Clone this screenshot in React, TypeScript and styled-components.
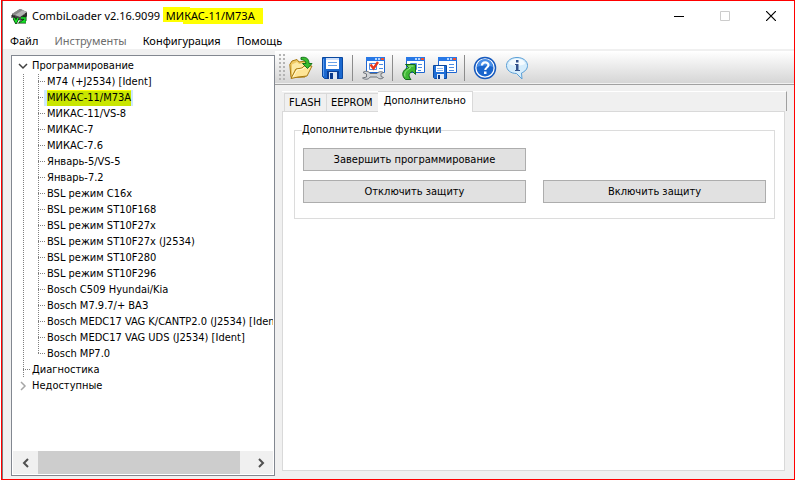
import React, { useState } from "react";
import styled, { createGlobalStyle, css } from "styled-components";

const uiFont = '"DejaVu Sans Condensed", "DejaVu Sans", sans-serif';
const titleFont = '"Noto Sans", "Open Sans", sans-serif';

const GlobalStyle = createGlobalStyle`
  *, *::before, *::after { box-sizing: border-box; }
  body { margin: 0; background: #fff; }
  button { font: inherit; color: inherit; padding: 0; border: 0; background: none; }
`;

const Frame = styled.div`
  display: flex;
  height: 100vh;
  padding-left: 1px;
  overflow: hidden;
  font: 11px/16px ${uiFont};
  color: #000;
`;

const Window = styled.div`
  flex: 1;
  min-width: 0;
  display: flex;
  flex-direction: column;
  border: 1px solid #f00;
  background: #f0f0f0;
  box-shadow: inset 1px 0 #7c7c7c;
  padding-left: 1px;
`;

const TitleBar = styled.header`
  display: flex;
  align-items: center;
  height: 30px;
  padding-left: 8px;
  background: #fff;
  font: 11px/16px ${titleFont};
`;

const Title = styled.h1`
  margin: 0 auto 0 4px;
  font: inherit;
  white-space: nowrap;
`;

const TitleMark = styled.mark`
  color: inherit;
  padding: 1px 8px 1px 3px;
  background:
    linear-gradient(#ff0, #ff0) 0 0 / 27px 15px no-repeat,
    linear-gradient(#ff0, #ff0) 20px 1px / 100% 100% no-repeat;
`;

const CaptionButton = styled.button`
  display: grid;
  place-items: center;
  width: 46px;
  height: 28px;
`;

const MenuBar = styled.nav`
  display: flex;
  gap: 16px;
  height: 18px;
  padding: 0 7px;
  background: #fff;
  font: 11px/20px ${titleFont};
`;

const MenuItem = styled.button`
  white-space: nowrap;
  &:disabled { color: #6d6d6d; }
`;

const Body = styled.div`
  flex: 1;
  min-height: 0;
  display: grid;
  grid-template-columns: minmax(0, 272fr) minmax(0, 519fr);
`;

const Side = styled.aside`
  display: flex;
  min-height: 0;
  padding: 6px 0 3px 8px;
`;

const TreePanel = styled.div`
  flex: 1;
  min-width: 0;
  display: flex;
  flex-direction: column;
  border: 1px solid #828790;
  background: #fff;
  padding: 1px;
`;

const TreeView = styled.ul`
  flex: 1;
  min-height: 0;
  overflow: hidden;
  margin: 0;
  padding: 1px 0 0;
  list-style: none;
`;

const Branch = styled.ul`
  margin: 0;
  padding: 0;
  list-style: none;
`;

const dots = "repeating-linear-gradient(#808080 0 1px, transparent 1px 2px)";
const dashes = "repeating-linear-gradient(90deg, #808080 0 1px, transparent 1px 2px)";

const Row = styled.div<{ $level: number; $last?: boolean; $leaf?: boolean }>`
  display: flex;
  align-items: center;
  height: 16px;
  white-space: nowrap;
  padding-left: ${(p) => (p.$level ? 31 : p.$leaf ? 16 : 3)}px;
  ${(p) =>
    p.$level
      ? css`
          background:
            ${dots} 10px 0 / 1px 100% no-repeat,
            ${dots} 25px 0 / 1px ${p.$last ? "8px" : "100%"} no-repeat,
            ${dashes} 25px 7px / 7px 1px no-repeat;
        `
      : p.$leaf &&
        css`
          background:
            ${dots} 10px 0 / 1px 100% no-repeat,
            ${dashes} 10px 7px / 7px 1px no-repeat;
        `}
`;

const Expander = styled.button`
  display: grid;
  place-items: center;
  width: 13px;
  height: 16px;
`;

const ItemLabel = styled.span<{ $selected?: boolean }>`
  padding: 0 2px 0 3px;
  ${(p) => p.$selected && "background: #cce8ff;"}
`;

const ItemMark = styled.mark`
  display: block;
  color: inherit;
  background: #c9e600;
  box-shadow: inset 0 1px #ff0;
`;

const ScrollBar = styled.div`
  display: flex;
  height: 23px;
  background: #f0f0f0;
`;

const ScrollArrow = styled.button`
  display: grid;
  place-items: center;
  width: 25px;
`;

const ScrollTrack = styled.div`
  flex: 1;
`;

const ScrollThumb = styled.div`
  width: 97%;
  max-width: 202px;
  height: 100%;
  background: #cdcdcd;
`;

const Main = styled.main`
  display: flex;
  flex-direction: column;
  min-width: 0;
  padding-top: 2px;
`;

const ToolBar = styled.div`
  display: flex;
  align-items: center;
  height: 34px;
  padding: 0 0 0 4px;
  border-top: 1px solid #fff;
  border-bottom: 1px solid #a0a0a0;
  box-shadow: inset 0 -1px #f0f0f0;
  background: linear-gradient(#fefefe, #d4d4d4);
`;

const Grip = styled.div`
  width: 6px;
  height: 28px;
  margin-right: 4px;
  background: radial-gradient(circle at 1px 1px, #b4b4b4 1px, transparent 1px) 0 0 / 4px 4px;
`;

const Tools = styled.div`
  display: flex;
  align-items: center;
  gap: 8px;
`;

const Tool = styled.button`
  width: 24px;
  height: 24px;
  svg { display: block; }
`;

const Divider = styled.span`
  width: 2px;
  height: 26px;
  margin: 0 -1px;
  border-left: 1px solid #8c8c8c;
`;

const TabArea = styled.section`
  flex: 1;
  min-height: 0;
  display: flex;
  flex-direction: column;
  margin: 6px 9px 8px 7px;
`;

const TabList = styled.div`
  display: flex;
  align-items: flex-end;
  height: 20px;
  padding-left: 2px;
  margin-right: -2px;
  border-top: 1px solid #fff;
  border-right: 1px solid #a0a0a0;
`;

const Tab = styled.button<{ $active: boolean }>`
  height: 18px;
  padding: 0 5px 0 4px;
  white-space: nowrap;
  border: 1px solid #d9d9d9;
  border-bottom: 0;
  ${(p) =>
    p.$active
      ? css`
          z-index: 1;
          height: 21px;
          padding: 0 6px 2px;
          margin: 0 0 -1px -1px;
          background: #fff;
        `
      : css`
          & + & { border-left: 0; }
        `}
`;

const TabPage = styled.div`
  flex: 1;
  padding: 10px 9px 0 11px;
  border: 1px solid #d9d9d9;
  background: #fff;
`;

const Group = styled.fieldset`
  margin: 0;
  min-width: 0;
  padding: 10px 8px 15px;
  border: 1px solid #dcdcdc;
`;

const Legend = styled.legend`
  padding: 0;
  margin-left: -1px;
`;

const Actions = styled.div`
  display: grid;
  grid-template-columns: 1fr 1fr;
  gap: 9px 17px;
`;

const PushButton = styled.button<{ $first?: boolean }>`
  height: 23px;
  border: 1px solid #adadad;
  background: #e1e1e1;
  white-space: nowrap;
  ${(p) => p.$first && "grid-column-start: 1;"}
`;

const ChipIcon = () => (
  <svg width="17" height="16" viewBox="0 0 17 16" aria-hidden="true">
    <path d="M1 6 9 1l7 3v4l-6 5-9-4z" fill="#4a4a4a" />
    <path d="M1 6 9 1l7 3-7 5z" fill="#b4b4b4" />
    <path d="M1 6 9 1l3 1-8 5z" fill="#888" />
    <path d="M1 7v3M3 8v3M11 9v3M13 7v3M15 5v4" stroke="#111" />
    <path d="m3 10 2 4 2-4M10 10h4v2l-3 2h4" fill="none" stroke="#0b3b0b" strokeWidth="3" />
    <path d="m3 10 2 4 2-4M10 10h4v2l-3 2h4" fill="none" stroke="#17e52a" strokeWidth="1.5" />
    <path d="M8 13h1v1H8z" fill="#17e52a" />
  </svg>
);

const OpenIcon = () => (
  <svg width="24" height="24" viewBox="0 0 24 24" aria-hidden="true">
    <path d="M2 21.500.8 8.500 3 5l5-1.500L10 6l7-1 1 4 1 3-3 9z" fill="#efc965" stroke="#a87910" />
    <path d="M3 8.500 8 6l2 2 6-1v4L6 13 3 20z" fill="#fce9a4" />
    <path d="M2 22.500 7 13l6-1 2-2 8 0-5 10-9 1z" fill="#ffe596" stroke="#a87910" />
    <path d="m4 21 4-7 6-1 2-2h5" fill="none" stroke="#fff6cd" />
    <path d="M12 1.500c5-1 8 1 8 6h3l-4.500 5-5-5H17c0-2-2-4-5-4z" fill="#37bd2f" stroke="#16751a" />
  </svg>
);

const SaveIcon = () => (
  <svg width="24" height="24" viewBox="0 0 24 24" aria-hidden="true">
    <path d="M1.500 1.500h20v21h-18l-2-2z" fill="#1c69cf" stroke="#0a489f" />
    <path d="M5 2h13v11H5z" fill="#fff" />
    <path d="M5 2h13v2H5z" fill="#cfe0fa" />
    <path d="M7 6.500h9M7 9.500h9" stroke="#6aa2e8" />
    <path d="M6 15h12v8H6z" fill="#0b3e96" />
    <path d="M8 16h8v7H8z" fill="#dde7f5" />
    <path d="M9 17h3v6H9z" fill="#0a3a8d" />
    <path d="M2.500 3v17" stroke="#5b9bef" />
  </svg>
);

const MiniWindow = () => (
  <>
    <path d="M5.500 1.500h18v15h-18z" fill="#fff" stroke="#1f66d0" />
    <path d="M5 1h19v4H5z" fill="#2878e6" />
    <path d="M14 2h2v2h-2zM17 2h2v2h-2z" fill="#b4d5ff" />
    <path d="M20 2h3v2h-3z" fill="#f3512c" />
  </>
);

const CheckIcon = () => (
  <svg width="24" height="24" viewBox="0 0 24 24" aria-hidden="true">
    <MiniWindow />
    <path d="M8.500 7.500h7v6h-7z" fill="#fff" stroke="#4d8ce4" />
    <path d="M18 8.500h4M18 12.500h4" stroke="#4d8ce4" />
    <path d="m9.500 8.500 3 4 4.500-6.500" fill="none" stroke="#e8371c" strokeWidth="2.400" />
    <path d="M2 16.500c2-2 6-1.500 7 1h7c2-2.500 5-2 6.500-1l-2.500 1v3l2.500 1c-2 2-5 1.500-6.500-.5H9c-1 2.500-5 3-7.500 1l4-1v-3z" fill="#d0d3d6" stroke="#6f747b" />
  </svg>
);

const LoadIcon = () => (
  <svg width="24" height="24" viewBox="0 0 24 24" aria-hidden="true">
    <MiniWindow />
    <path d="M9.500 7.500h6v6h-6z" fill="#fff" stroke="#4d8ce4" />
    <path d="M17 8.500h4M17 11.500h4M17 14.500h3" stroke="#4d8ce4" />
    <path d="M4.500 8.500h10v10l-3-3c-4 1.500-4.500 4.500-1.500 8H4.500C0 19.500 1 14 7.500 11.500z" fill="#3db934" stroke="#12671a" />
    <path d="M4 20.500c-1-4 1-6 5.500-8.500l-2-2h5" fill="none" stroke="#9be88a" />
  </svg>
);

const StoreIcon = () => (
  <svg width="24" height="24" viewBox="0 0 24 24" aria-hidden="true">
    <MiniWindow />
    <path d="M16 8.500h5M16 11.500h5M16 14.500h5" stroke="#4d8ce4" />
    <path d="M.5 9.500h13v13h-12l-1-1z" fill="#1f6ed6" stroke="#0a489f" />
    <path d="M3 10h8v6H3z" fill="#fff" />
    <path d="M4 12.500h6M4 14.500h6" stroke="#8bb6ee" />
    <path d="M4 18h7v5H4z" fill="#e4ecf7" />
    <path d="M5 19h2v4H5z" fill="#0a3a8d" />
  </svg>
);

const HelpIcon = () => (
  <svg width="24" height="24" viewBox="0 0 24 24" aria-hidden="true">
    <circle cx="12" cy="12" r="10.500" fill="#fff" stroke="#1659bd" strokeWidth="1.500" />
    <circle cx="12" cy="12" r="8.500" fill="#1b66cd" />
    <path d="M4 11a8 8 0 0 1 16 0c-5-2-11-2-16 0z" fill="#4a8fe8" />
    <path d="M9 9.500c0-4 6.500-4 6.500-.5 0 2.500-3.200 2.500-3.200 5" fill="none" stroke="#fff" strokeWidth="2.200" />
    <path d="M11 15.500h2.500V18H11z" fill="#fff" />
  </svg>
);

const InfoIcon = () => (
  <svg width="24" height="24" viewBox="0 0 24 24" aria-hidden="true">
    <path d="M12 1.500c6 0 10.500 3.500 10.500 8 0 3.500-2.500 6-6 7.500L17 23l-5.500-5.500C5.500 17.500 1.500 14 1.500 9.500c0-4.500 4.500-8 10.500-8z" fill="#d6edfc" stroke="#5a9fd6" />
    <path d="M4 8c1-7 15-7 16 0-5 2-11 2-16 0z" fill="#f4fbff" />
    <path d="M11 4h2.500v2.500H11zM10 8h3.500v6H15v1h-5v-1h1V9h-1z" fill="#33528c" />
  </svg>
);

const Chevron = ({ d, color, width = 2 }: { d: string; color: string; width?: number }) => (
  <svg width="10" height="10" viewBox="0 0 10 10" aria-hidden="true">
    <path d={d} fill="none" stroke={color} strokeWidth={width} />
  </svg>
);

const devices = [
  "M74 (+J2534) [Ident]",
  "МИКАС-11/М73А",
  "МИКАС-11/VS-8",
  "МИКАС-7",
  "МИКАС-7.6",
  "Январь-5/VS-5",
  "Январь-7.2",
  "BSL режим C16x",
  "BSL режим ST10F168",
  "BSL режим ST10F27x",
  "BSL режим ST10F27x (J2534)",
  "BSL режим ST10F280",
  "BSL режим ST10F296",
  "Bosch C509 Hyundai/Kia",
  "Bosch M7.9.7/+ ВАЗ",
  "Bosch MEDC17 VAG K/CANTP2.0 (J2534) [Ident]",
  "Bosch MEDC17 VAG UDS (J2534) [Ident]",
  "Bosch MP7.0",
];
const selectedDevice = "МИКАС-11/М73А";
const tabs = ["FLASH", "EEPROM", "Дополнительно"];

export default function App() {
  const [tab, setTab] = useState(tabs[2]);
  return (
    <Frame>
      <GlobalStyle />
      <Window>
        <TitleBar>
          <ChipIcon />
          <Title>
            CombiLoader v2.16.9099 <TitleMark>МИКАС-11/М73А</TitleMark>
          </Title>
          <CaptionButton aria-label="Свернуть">
            <svg width="10" height="10" aria-hidden="true"><path d="M0 5.500h10" stroke="#000" /></svg>
          </CaptionButton>
          <CaptionButton aria-label="Развернуть" disabled>
            <svg width="10" height="10" aria-hidden="true"><path d="M.5.500h9v9h-9z" fill="none" stroke="#ccc" /></svg>
          </CaptionButton>
          <CaptionButton aria-label="Закрыть">
            <svg width="10" height="10" aria-hidden="true"><path d="m0 0 10 10M10 0 0 10" stroke="#000" strokeWidth="1.200" /></svg>
          </CaptionButton>
        </TitleBar>
        <MenuBar>
          <MenuItem>Файл</MenuItem>
          <MenuItem disabled>Инструменты</MenuItem>
          <MenuItem>Конфигурация</MenuItem>
          <MenuItem>Помощь</MenuItem>
        </MenuBar>
        <Body>
          <Side>
            <TreePanel>
              <TreeView role="tree">
                <li role="treeitem" aria-expanded="true">
                  <Row $level={0}>
                    <Expander aria-label="Свернуть ветвь"><Chevron d="m1 3 4 4 4-4" color="#404040" width={1.5} /></Expander>
                    <ItemLabel>Программирование</ItemLabel>
                  </Row>
                  <Branch role="group">
                    {devices.map((name, i) => (
                      <li key={name} role="treeitem" aria-selected={name === selectedDevice}>
                        <Row $level={1} $last={i === devices.length - 1}>
                          <ItemLabel $selected={name === selectedDevice}>
                            {name === selectedDevice ? <ItemMark>{name}</ItemMark> : name}
                          </ItemLabel>
                        </Row>
                      </li>
                    ))}
                  </Branch>
                </li>
                <li role="treeitem"><Row $level={0} $leaf><ItemLabel>Диагностика</ItemLabel></Row></li>
                <li role="treeitem" aria-expanded="false">
                  <Row $level={0}>
                    <Expander aria-label="Развернуть ветвь"><Chevron d="m3 1 4 4-4 4" color="#a6a6a6" width={1.5} /></Expander>
                    <ItemLabel>Недоступные</ItemLabel>
                  </Row>
                </li>
              </TreeView>
              <ScrollBar>
                <ScrollArrow aria-label="Прокрутить влево"><Chevron d="M7 1 3 5l4 4" color="#505050" /></ScrollArrow>
                <ScrollTrack><ScrollThumb /></ScrollTrack>
                <ScrollArrow aria-label="Прокрутить вправо"><Chevron d="m3 1 4 4-4 4" color="#505050" /></ScrollArrow>
              </ScrollBar>
            </TreePanel>
          </Side>
          <Main>
            <ToolBar role="toolbar">
              <Grip />
              <Tools>
                <Tool aria-label="Открыть"><OpenIcon /></Tool>
                <Tool aria-label="Сохранить"><SaveIcon /></Tool>
                <Divider />
                <Tool aria-label="Проверить"><CheckIcon /></Tool>
                <Divider />
                <Tool aria-label="Загрузить"><LoadIcon /></Tool>
                <Tool aria-label="Записать"><StoreIcon /></Tool>
                <Divider />
                <Tool aria-label="Справка"><HelpIcon /></Tool>
                <Tool aria-label="О программе"><InfoIcon /></Tool>
              </Tools>
            </ToolBar>
            <TabArea>
              <TabList role="tablist">
                {tabs.map((t) => (
                  <Tab key={t} role="tab" aria-selected={t === tab} $active={t === tab} onClick={() => setTab(t)}>
                    {t}
                  </Tab>
                ))}
              </TabList>
              <TabPage role="tabpanel">
                <Group>
                  <Legend>Дополнительные функции</Legend>
                  <Actions>
                    <PushButton $first>Завершить программирование</PushButton>
                    <PushButton $first>Отключить защиту</PushButton>
                    <PushButton>Включить защиту</PushButton>
                  </Actions>
                </Group>
              </TabPage>
            </TabArea>
          </Main>
        </Body>
      </Window>
    </Frame>
  );
}
